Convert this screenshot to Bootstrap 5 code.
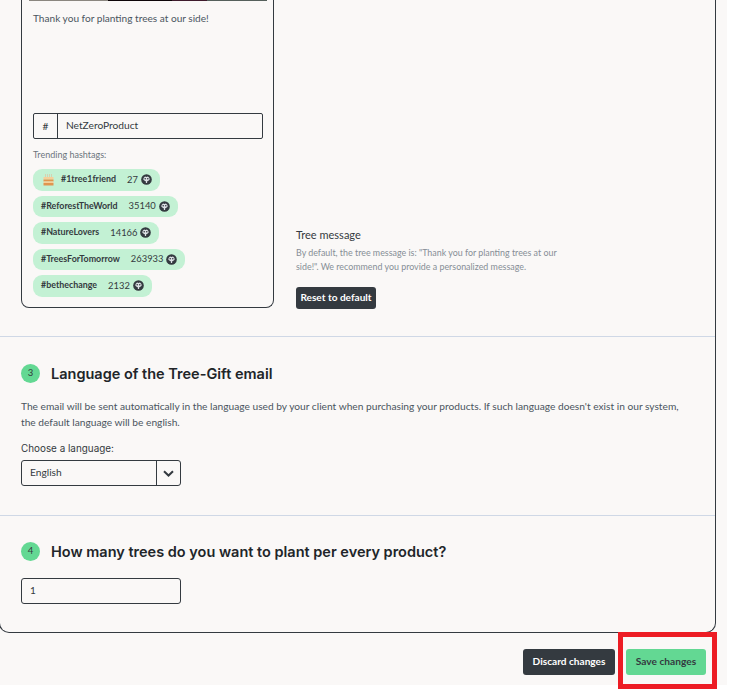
<!DOCTYPE html>
<html lang="en">

<head>
    <meta charset="UTF-8">
    <meta name="viewport" content="width=device-width, initial-scale=1.0">
    <title>Tree gift settings</title>
    <link href="https://cdn.jsdelivr.net/npm/bootstrap@5.3.0/dist/css/bootstrap.min.css" rel="stylesheet">
    <style>
        html, body { background: #fff; margin: 0; }
        body { font-family: Lato, sans-serif; color: #343a40; overflow: hidden; position: relative; height: 694px; }
        .screen { width: 727px; height: 685px; background: #faf8f7; overflow: hidden; }
        .panel { width: 717px; height: 633px; margin-left: -1px; border: 1.5px solid #343a40; border-top: 0; border-radius: 0 0 10px 10px; }
        .top-part { height: 336px; padding-left: 21px; gap: 22px; }
        .msg-card { width: 253px; height: 308px; border: 1.5px solid #343a40; border-top: 0; border-radius: 0 0 8px 8px; padding: 0 10px 0 11px; flex-shrink: 0; }
        .photo-strip { height: 1px; margin: 0 -4px; background: linear-gradient(90deg, #8b8780 0 33%, #0d0508 33% 60%, #3f1b2c 60% 75%, #55605c 75% 100%); }
        .msg-text { font-size: 10.1px; margin-top: 10px; height: 102px; color: #4a5560; line-height: 14px; }
        .tag-input { height: 26px; border: 1.2px solid #343a40; border-radius: 2px; font-size: 10.2px; margin-bottom: 10px; }
        .tag-hash { width: 24px; height: 100%; line-height: 24px; border-right: 1.2px solid #343a40; }
        .tag-value { padding-left: 8px; }
        .trend-label { font-size: 9px; line-height: 12px; color: #6c757d; margin-bottom: 8px; }
        .tag-list { gap: 5px; }
        .tag-pill { height: 21.5px; background: #c3f1d4; border-radius: 9px; padding: 0 8px; font-size: 9.4px; color: #343a40; }
        .tag-name { font-size: 8.9px; font-weight: 700; margin-right: 11px; padding-bottom: 2px; }
        .tag-count { margin-right: 3px; }
        .cake { margin: 0 7px 0 2px; }
        .side-part { width: 270px; padding-bottom: 27px; }
        .side-title { font-size: 11px; line-height: 14px; color: #343a40; margin-bottom: 4px; }
        .side-text { font-size: 8.9px; line-height: 14px; color: #868e96; margin-bottom: 13px; }
        .dark-btn { background: #343a40; color: #fff; border: 0; border-radius: 3px; font-size: 10.1px; font-weight: 700; }
        .reset-btn { width: 80px; height: 22px; padding: 0; }
        .form-part { border-top: 1px solid #cfd8e6; padding: 0 21px; }
        .lang-part { height: 179px; padding-top: 27px; }
        .count-part { height: 117px; padding-top: 26px; }
        .step-dot { width: 19px; height: 19px; background: #63d893; border-radius: 50%; font-size: 9.5px; color: #343a40; margin-right: 11px; }
        .step-title { font-family: Inter, sans-serif; font-size: 14.5px; font-weight: 600; color: #212529; margin: 0; line-height: 19px; }
        .lang-text { font-size: 10.2px; line-height: 16px; color: #4a5560; margin: 15px 0 12px; }
        .lang-label { font-family: Inter, sans-serif; font-size: 9.9px; color: #343a40; margin-bottom: 5px; line-height: 13px; }
        .lang-select { width: 160px; height: 26px; border: 1.2px solid #343a40; border-radius: 3px; font-size: 10.2px; }
        .lang-value { padding-left: 8px; }
        .lang-arrow { width: 24px; height: 100%; border-left: 1.2px solid #343a40; }
        .count-input { width: 160px; height: 26px; border: 1.2px solid #343a40; border-radius: 3px; font-size: 10px; padding: 0 0 1px 8px; margin-top: 17px; }
        .foot-part { padding: 16px 21px 0 0; gap: 11px; }
        .discard-btn { width: 92px; height: 26px; padding: 0; }
        .save-btn { width: 80px; height: 26px; padding: 0; background: #63d893; color: #343a40; border: 0; border-radius: 3px; font-size: 10.2px; font-weight: 700; }
        .red-mark { position: absolute; left: 618px; top: 632px; width: 99px; height: 57px; border: 5px solid #ed1c24; }
    </style>
</head>

<body>
    <svg width="0" height="0" class="position-absolute">
        <symbol id="tree-badge" viewBox="0 0 12 12">
            <circle cx="6" cy="6" r="5.8" fill="#343a40" />
            <path d="M2.8 4.4 4.4 2.8 6 3.4 7.6 2.8 9.2 4.4 9.4 6.2 7.6 7.6H6.9L6.6 9.8H5.4L5.1 7.6H4.4L2.6 6.2Z" fill="#dee2e6" />
            <circle cx="4.6" cy="5.2" r=".9" fill="#343a40" />
            <circle cx="7.4" cy="5.2" r=".9" fill="#343a40" />
        </symbol>
    </svg>

    <div class="screen">
        <div class="panel">
            <!-- Tree message -->
            <div class="top-part d-flex">
                <div class="msg-card d-flex flex-column">
                    <div class="photo-strip"></div>
                    <div class="msg-text">Thank you for planting trees at our side!</div>
                    <div class="tag-input d-flex align-items-center">
                        <div class="tag-hash text-center">#</div>
                        <div class="tag-value">NetZeroProduct</div>
                    </div>
                    <div class="trend-label">Trending hashtags:</div>
                    <div class="tag-list d-flex flex-column align-items-start">
                        <div class="tag-pill d-flex align-items-center">
                            <svg class="cake" width="11" height="12" viewBox="0 0 11 12">
                                <path d="M2.5 0v3M4.5 0v3M6.5 0v3M8.5 0v3" stroke="#d9c9a8" stroke-width=".8" />
                                <rect x=".5" y="3" width="10" height="2.5" fill="#f6cf9a" />
                                <rect x=".5" y="5.5" width="10" height="2" fill="#e0954f" />
                                <rect x=".5" y="7.5" width="10" height="1.5" fill="#f6cf9a" />
                                <rect x=".5" y="9" width="10" height="2.5" fill="#e0954f" />
                            </svg>
                            <span class="tag-name">#1tree1friend</span>
                            <span class="tag-count">27</span>
                            <svg width="11" height="11"><use href="#tree-badge" /></svg>
                        </div>
                        <div class="tag-pill d-flex align-items-center">
                            <span class="tag-name">#ReforestTheWorld</span>
                            <span class="tag-count">35140</span>
                            <svg width="11" height="11"><use href="#tree-badge" /></svg>
                        </div>
                        <div class="tag-pill d-flex align-items-center">
                            <span class="tag-name">#NatureLovers</span>
                            <span class="tag-count">14166</span>
                            <svg width="11" height="11"><use href="#tree-badge" /></svg>
                        </div>
                        <div class="tag-pill d-flex align-items-center">
                            <span class="tag-name">#TreesForTomorrow</span>
                            <span class="tag-count">263933</span>
                            <svg width="11" height="11"><use href="#tree-badge" /></svg>
                        </div>
                        <div class="tag-pill d-flex align-items-center">
                            <span class="tag-name">#bethechange</span>
                            <span class="tag-count">2132</span>
                            <svg width="11" height="11"><use href="#tree-badge" /></svg>
                        </div>
                    </div>
                </div>
                <div class="side-part d-flex flex-column justify-content-end align-items-start">
                    <div class="side-title">Tree message</div>
                    <div class="side-text">By default, the tree message is: "Thank you for planting trees at our side!". We recommend you provide a personalized message.</div>
                    <button type="button" class="btn dark-btn reset-btn">Reset to default</button>
                </div>
            </div>

            <!-- Language -->
            <div class="form-part lang-part">
                <div class="d-flex align-items-center">
                    <span class="step-dot d-flex align-items-center justify-content-center">3</span>
                    <h2 class="step-title">Language of the Tree-Gift email</h2>
                </div>
                <p class="lang-text">The email will be sent automatically in the language used by your client when purchasing your products. If such language doesn't exist in our system, the default language will be english.</p>
                <div class="lang-label">Choose a language:</div>
                <div class="lang-select d-flex align-items-center justify-content-between">
                    <span class="lang-value">English</span>
                    <span class="lang-arrow d-flex align-items-center justify-content-center">
                        <svg width="11" height="7" viewBox="0 0 11 7"><path d="M1 1.2 5.5 5.5 10 1.2" fill="none" stroke="#343a40" stroke-width="2" /></svg>
                    </span>
                </div>
            </div>

            <!-- Tree count -->
            <div class="form-part count-part">
                <div class="d-flex align-items-center">
                    <span class="step-dot d-flex align-items-center justify-content-center">4</span>
                    <h2 class="step-title">How many trees do you want to plant per every product?</h2>
                </div>
                <div class="count-input d-flex align-items-center">1</div>
            </div>
        </div>

        <div class="foot-part d-flex justify-content-end">
            <button type="button" class="btn dark-btn discard-btn">Discard changes</button>
            <button type="button" class="btn save-btn">Save changes</button>
        </div>
    </div>

    <div class="red-mark"></div>

    <script src="https://cdn.jsdelivr.net/npm/bootstrap@5.3.0/dist/js/bootstrap.bundle.min.js"></script>
</body>

</html>
